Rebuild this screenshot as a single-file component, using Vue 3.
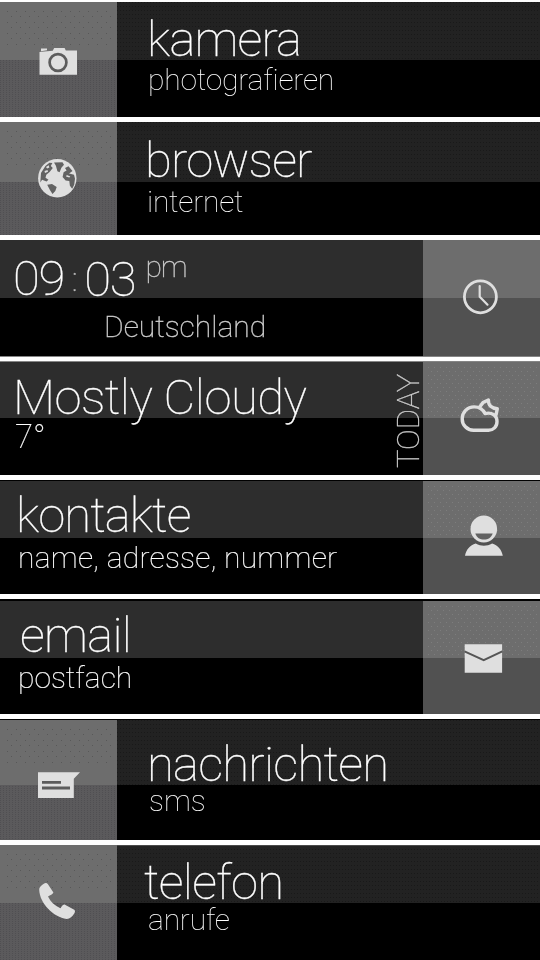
<template>
  <main class="launcher">
    <section v-for="row in rows" :key="row.id" class="row" :class="[row.side, row.id]">
      <!-- icon tile -->
      <div class="tile">
        <svg class="icon" :viewBox="row.box">
          <g v-if="row.id === 'kamera'">
            <path d="M39.5 52l5-.6 8.2-.7 1.5-2.7h10.4l1.2 2.5H77v24.3H39.5z" />
            <path d="M41 48.5h6v1.8l-6 1z" />
            <circle class="ring" cx="58" cy="62.5" r="8.4" />
          </g>
          <g v-else-if="row.id === 'browser'">
            <circle cx="57.3" cy="178.2" r="19.2" />
            <path class="cut" d="M54 162.5l8.5-.3 1.5 2.5-2.6 3-1.8 4.6-2.2-1-1.5-5.6zM65 168l3.5-1.8 4 4.8-3.4 2.5 4.9 1.2 1 4-.8 6-2 4-2.3-3-.6-4.8-3.7-.4-3-3.6 1-4.6 3-1.8zM47.2 184.8l4.8-.8 4.7 3-1.4 4-2.8 3-2.7-4.3zM41 173l4.4-7 4-3.3 3 .3-1.6 3 2 2-3.2 4-3.3 2.7-.8 3.1 3 2-2 1.6-4.4-1.7-1.8 2.8z" />
            <path d="M46 167l2.7-1.8.7 2.2-2.3 1zM44.5 171l3-1 .5 1.7-3 1.2zM66.8 175l3.5 1.4-1 1.1-3.3-1z" />
          </g>
          <g v-else-if="row.id === 'uhr'" class="line">
            <circle cx="480.4" cy="296.8" r="16" />
            <path class="hands" d="M479.7 286v10.7l7.8 8" />
          </g>
          <g v-else-if="row.id === 'wetter'" class="line cloud">
            <path d="M473.5 430.2c-6.6 0-11.3-5.3-11.3-11.3 0-6.7 5-12 12-12 5 0 8.7 2.4 10.8 6.7 6.5-1.7 12 1.5 12 8 0 5.2-3.7 8.6-8.5 8.6z" />
            <path d="M480 406.5l3-3.9 5.4-2.7c-.2 5.6 3.2 8.6 8.9 8.8l-1.2 6" />
          </g>
          <g v-else-if="row.id === 'kontakte'">
            <ellipse cx="483.8" cy="529" rx="13.3" ry="13.4" />
            <path class="cut" d="M475.3 533.4h17.4c-1.6 4.3-4.5 6.2-8.7 6.2s-7.2-2-8.7-6.2z" />
            <path d="M465 555.8c1.2-6.3 5-10.3 10.7-12.2 5.5 2.9 11 2.9 16.4 0 5.7 1.9 9.5 5.9 10.7 12.2z" />
          </g>
          <g v-else-if="row.id === 'email'">
            <path d="M464.7 644.2h37.4v28.5h-37.4z" />
            <path class="fold" d="M464.5 651.3l19.2 8.9 18.6-8.9" />
          </g>
          <g v-else-if="row.id === 'nachrichten'">
            <path d="M38 772.3h42l-6.2 6.4V798H38z" />
            <path class="bars" d="M42 782.3h19M42 788h28" />
          </g>
          <g v-else>
            <path d="M39.2 889.8c-.3-2.2 2.2-4.4 4.6-6 1.6-1.2 3.3-.8 4.3.8l5.3 8c-.8 1.7-3 2.8-5.4 3.9 2.6 5.4 6.6 9.2 12.4 11.7 1.4-1.6 2.4-4.2 4.2-3.7l9.6 5.3c1.2 1 .9 2.3.2 3.4-1.9 3.3-4.7 5.9-7.7 5.8-13.2-1.7-27-15.5-27.5-29.2z" />
          </g>
        </svg>
      </div>

      <!-- label panel -->
      <div class="panel">
        <div class="labels">
          <h2 v-if="row.id === 'uhr'" class="title clock">
            <span>09</span><span class="colon">:</span><span class="minutes">03</span><span class="ampm">pm</span>
          </h2>
          <h2 v-else class="title">{{ row.title }}</h2>
          <p class="sub">{{ row.sub }}</p>
        </div>
        <span v-if="row.note" class="note">{{ row.note }}</span>
      </div>
    </section>
  </main>
</template>

<script setup>
const rows = [
  { id: 'kamera', side: 'left', title: 'kamera', sub: 'photografieren', box: '0 2 117 115' },
  { id: 'browser', side: 'left', title: 'browser', sub: 'internet', box: '0 122 117 113' },
  { id: 'uhr', side: 'right', sub: 'Deutschland', box: '423 240 117 116' },
  { id: 'wetter', side: 'right', title: 'Mostly Cloudy', sub: '7°', note: 'TODAY', box: '423 362 117 113' },
  { id: 'kontakte', side: 'right', title: 'kontakte', sub: 'name, adresse, nummer', box: '423 481 117 113' },
  { id: 'email', side: 'right', title: 'email', sub: 'postfach', box: '423 601 117 113' },
  { id: 'nachrichten', side: 'left', title: 'nachrichten', sub: 'sms', box: '0 720 117 120' },
  { id: 'telefon', side: 'left', title: 'telefon', sub: 'anrufe', box: '0 845 117 115' },
];
</script>

<style>
body {
  margin: 0;
  background: #fff;
}
</style>

<style scoped>
.launcher {
  box-sizing: border-box;
  width: 540px;
  height: 960px;
  padding-top: 2px;
  display: grid;
  grid-template-rows: 115px 113px 116px 114px 114px 115px 121px 115px;
  row-gap: 5px;
  align-content: start;
  overflow: hidden;
  background: #fff;
  font-family: Roboto, 'Liberation Sans', sans-serif;
  font-weight: 100;
}

.row {
  box-sizing: border-box;
  display: flex;
  overflow: hidden;
  background: #000;
}

.row.right {
  flex-direction: row-reverse;
}

.tile {
  position: relative;
  flex: 0 0 117px;
  overflow: hidden;
  background: linear-gradient(#6d6d6d var(--split), #515151 var(--split));
}

/* fine grain on the left hand tiles */
.left .tile {
  background:
    linear-gradient(#6d6d6d var(--split), transparent var(--split)),
    radial-gradient(circle at 0.5px 0.5px, #504f52 0.6px, transparent 0.6px) 0 0 / 3px 2px,
    #5b5a5c;
}

.tile::before {
  content: '';
  position: absolute;
  inset: 8px 3px auto 4px;
  height: 35px;
  background:
    radial-gradient(circle at 0.5px 0.5px, #585858 0.6px, transparent 0.6px) 3px 1px / 9px 11px,
    radial-gradient(circle at 0.5px 0.5px, #585858 0.6px, transparent 0.6px) 7px 6px / 9px 11px;
}

.right .tile::before {
  height: calc(var(--split) - 7px);
  inset: 5px 2px auto 5px;
  background:
    radial-gradient(circle at 0.5px 0.5px, #7d7d7d 0.6px, transparent 0.6px) 0 0 / 6px 8px,
    radial-gradient(circle at 0.5px 0.5px, #7d7d7d 0.6px, transparent 0.6px) 3px 4px / 6px 8px;
}

.uhr .tile::before {
  display: none;
}

.icon {
  position: relative;
  display: block;
  width: 100%;
  height: 100%;
  fill: #dfdfdf;
}

.ring {
  fill: none;
  stroke: #5c5c5c;
  stroke-width: 2.7;
}

.cut {
  fill: #626262;
}

.line {
  fill: none;
  stroke: #dfdfdf;
  stroke-width: 2.8;
  stroke-linejoin: round;
  stroke-linecap: round;
}

.hands {
  stroke-width: 2.2;
}

.cloud {
  stroke-width: 3.4;
}

.fold {
  fill: none;
  stroke: #555;
  stroke-width: 2;
}

.bars {
  fill: none;
  stroke: #5c5c5c;
  stroke-width: 2.8;
}

.panel {
  flex: 1;
  display: flex;
  justify-content: space-between;
  min-width: 0;
  background: linear-gradient(#2d2d2d var(--split), #000 var(--split));
}

.left .panel {
  background:
    linear-gradient(transparent var(--split), #000 var(--split)),
    radial-gradient(circle at 0.5px 0.5px, #191919 0.6px, transparent 0.6px) 0 0 / 3px 4px,
    #222;
}

.labels {
  padding-top: var(--top);
  white-space: nowrap;
  will-change: transform;
}

.title {
  margin: 0 0 0 var(--title-x);
  color: #fff;
  font-size: 49px;
  font-weight: 100;
  line-height: 50px;
  letter-spacing: var(--title-ls, 0);
  -webkit-text-stroke: 0.3px;
}

.sub {
  margin: var(--gap) 0 0 var(--sub-x);
  color: #fff;
  font-size: 30px;
  line-height: 34px;
  letter-spacing: var(--sub-ls, 0);
}

.right .sub {
  -webkit-text-stroke: 0.2px;
}

.clock {
  display: flex;
}

.colon {
  width: 20px;
  text-align: center;
  font-size: 34px;
  color: #bbb;
}

.minutes {
  padding-top: 1px;
}

.ampm {
  margin: -12px 0 0 10px;
  font-size: 30px;
  color: #ccc;
}

.note {
  writing-mode: vertical-rl;
  transform: rotate(180deg);
  margin: 10px -1px 0 0;
  height: 96px;
  font-size: 31px;
  line-height: 30px;
  color: #ccc;
  -webkit-text-stroke: 0.3px;
  will-change: transform;
}

/* vertical rhythm and indents of each row */
.kamera {
  --split: 58px;
  --top: 13px;
  --gap: -2px;
  --title-x: 30px;
  --title-ls: -0.8px;
  --sub-x: 31px;
  --sub-ls: -0.2px;
}

.browser {
  --split: 60px;
  --top: 14px;
  --gap: -1px;
  --title-x: 28px;
  --title-ls: -0.8px;
  --sub-x: 30px;
  --sub-ls: -0.25px;
}

.uhr {
  --split: 58px;
  --top: 14px;
  --gap: 5px;
  --title-x: 13px;
  --title-ls: -1.2px;
  --sub-x: 104px;
  margin-bottom: -1px;
  border-bottom: 1px solid #858585;
}

.uhr .sub {
  color: #ccc;
  -webkit-text-stroke: 0.4px;
}

.wetter {
  --split: 56px;
  --top: 11px;
  --gap: -3px;
  --title-x: 13px;
  --title-ls: -0.5px;
  --sub-x: 15px;
  border-top: 1px solid #858585;
}

.wetter .sub {
  font-size: 33px;
}

.kontakte {
  --split: 57px;
  --top: 10px;
  --gap: 0px;
  --title-x: 16px;
  --title-ls: -0.9px;
  --sub-x: 18px;
  --sub-ls: 0.27px;
  border-top: 1px solid #000;
}

.email {
  --split: 57px;
  --top: 10px;
  --gap: 0px;
  --title-x: 20px;
  --title-ls: -0.7px;
  --sub-x: 18px;
  border-top: 2px solid #000;
}

.nachrichten {
  --split: 65px;
  --top: 20px;
  --gap: -6px;
  --title-x: 30px;
  --title-ls: -0.75px;
  --sub-x: 32px;
  border-top: 1px solid #000;
}

.telefon {
  --split: 58px;
  --top: 13px;
  --gap: -5px;
  --title-x: 27px;
  --title-ls: -0.7px;
  --sub-x: 31px;
  --sub-ls: -0.2px;
}

.telefon .panel {
  box-shadow: inset 0 1px #4a4a4a;
}
</style>
